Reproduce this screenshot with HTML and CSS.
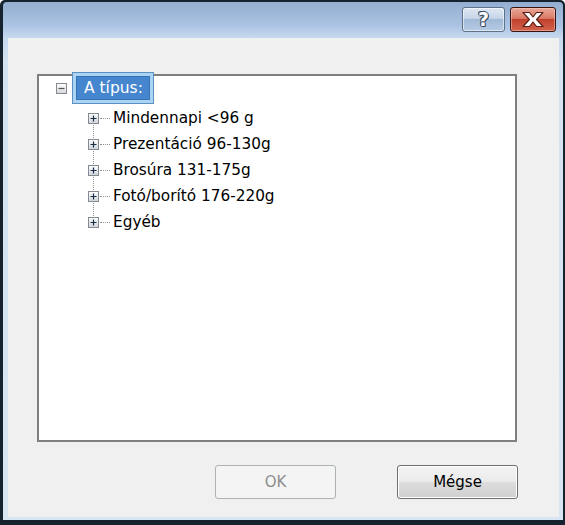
FILE: index.html
```html
<!DOCTYPE html>
<html lang="hu">
<head>
<meta charset="utf-8">
<title>A típus</title>
<link rel="stylesheet" href="styles.css">
</head>
<body>
<div class="window">
  <div class="frame">
    <div class="titlebar">
      <button class="cap-btn help" type="button"><span class="q">?</span></button>
      <button class="cap-btn close" type="button">
        <svg width="24" height="17" viewBox="0 0 24 17" aria-hidden="true">
          <path d="M2 1.5 H8.5 L12 6 L15.5 1.5 H22 L15.6 8.5 L22 15.5 H15.5 L12 11 L8.5 15.5 H2 L8.4 8.5 Z" fill="#ffffff" stroke="#5a2018" stroke-width="1.2" stroke-linejoin="round"/>
        </svg>
      </button>
    </div>
    <div class="content">
      <div class="tree">
        <div class="root-row">
          <svg class="expander" width="11" height="11" viewBox="0 0 11 11" aria-hidden="true">
            <defs><linearGradient id="gm" x1="0" y1="0" x2="0" y2="1"><stop offset="0" stop-color="#ffffff"/><stop offset="1" stop-color="#d3d6da"/></linearGradient></defs>
            <rect x="0.5" y="0.5" width="10" height="10" fill="url(#gm)" stroke="#858a90"/>
            <path d="M2.5 5.5 H8.5" stroke="#555555" stroke-width="1.2"/>
          </svg>
          <span class="root-label">A típus:</span>
        </div>
        <ul class="children">
          <li class="node"><svg class="expander" width="11" height="11" viewBox="0 0 11 11" aria-hidden="true"><defs><linearGradient id="gp" x1="0" y1="0" x2="0" y2="1"><stop offset="0" stop-color="#ffffff"/><stop offset="1" stop-color="#cfd4da"/></linearGradient></defs><rect x="0.5" y="0.5" width="10" height="10" fill="url(#gp)" stroke="#858a90"/><path d="M2.5 5.5 H8.5 M5.5 2.5 V8.5" stroke="#1a2e48" stroke-width="1.2"/></svg><span class="connector"></span><span class="node-text">Mindennapi &lt;96 g</span></li>
          <li class="node"><svg class="expander" width="11" height="11" viewBox="0 0 11 11" aria-hidden="true"><rect x="0.5" y="0.5" width="10" height="10" fill="url(#gp)" stroke="#858a90"/><path d="M2.5 5.5 H8.5 M5.5 2.5 V8.5" stroke="#1a2e48" stroke-width="1.2"/></svg><span class="connector"></span><span class="node-text">Prezentáció 96-130g</span></li>
          <li class="node"><svg class="expander" width="11" height="11" viewBox="0 0 11 11" aria-hidden="true"><rect x="0.5" y="0.5" width="10" height="10" fill="url(#gp)" stroke="#858a90"/><path d="M2.5 5.5 H8.5 M5.5 2.5 V8.5" stroke="#1a2e48" stroke-width="1.2"/></svg><span class="connector"></span><span class="node-text">Brosúra 131-175g</span></li>
          <li class="node"><svg class="expander" width="11" height="11" viewBox="0 0 11 11" aria-hidden="true"><rect x="0.5" y="0.5" width="10" height="10" fill="url(#gp)" stroke="#858a90"/><path d="M2.5 5.5 H8.5 M5.5 2.5 V8.5" stroke="#1a2e48" stroke-width="1.2"/></svg><span class="connector"></span><span class="node-text">Fotó/borító 176-220g</span></li>
          <li class="node"><svg class="expander" width="11" height="11" viewBox="0 0 11 11" aria-hidden="true"><rect x="0.5" y="0.5" width="10" height="10" fill="url(#gp)" stroke="#858a90"/><path d="M2.5 5.5 H8.5 M5.5 2.5 V8.5" stroke="#1a2e48" stroke-width="1.2"/></svg><span class="connector"></span><span class="node-text">Egyéb</span></li>
        </ul>
      </div>
      <div class="actions">
        <button class="btn btn-disabled" type="button" disabled>OK</button>
        <button class="btn btn-default" type="button">Mégse</button>
      </div>
    </div>
  </div>
</div>
</body>
</html>
```
FILE: styles.css
```css
* { box-sizing: border-box; }

html, body {
  margin: 0;
  padding: 0;
  background: #ffffff;
}

body {
  font-family: "DejaVu Sans", "Liberation Sans", sans-serif;
  font-size: 15px;
  color: #000;
}

.window {
  width: 565px;
  height: 525px;
  background: #16222e;
  padding: 2px 2px 5px 3px;
  border-radius: 5px 5px 0 0;
}

.frame {
  height: 100%;
  display: flex;
  flex-direction: column;
  padding: 0 4px 3px 5px;
  background: linear-gradient(#93aed1 0px, #acc4e3 24px, #c7d9ee 36px, #d4e3f2 60px, #d8e6f3 100%);
  border-radius: 4px 4px 0 0;
}

.titlebar {
  height: 36px;
  flex: none;
  display: flex;
  justify-content: flex-end;
  align-items: flex-start;
  gap: 5px;
  padding: 5px 3px 0 0;
}

.cap-btn {
  height: 25px;
  margin: 0;
  padding: 0;
  border-radius: 3px;
  display: flex;
  align-items: center;
  justify-content: center;
  cursor: default;
}

.help {
  width: 43px;
  border: 1px solid #5f7289;
  background: linear-gradient(#dfe8f3 0%, #c6d5e8 45%, #a3bad8 50%, #b5cae3 100%);
  box-shadow: inset 0 0 0 1px rgba(255,255,255,0.55);
}

.help .q {
  font-family: "DejaVu Sans", sans-serif;
  font-weight: bold;
  font-size: 19px;
  color: #ffffff;
  line-height: 1;
  text-shadow: 1px 0 0 #3d4f66, -1px 0 0 #3d4f66, 0 1px 0 #3d4f66, 0 -1px 0 #3d4f66, 1px 1px 0 #3d4f66, -1px -1px 0 #3d4f66;
}

.close {
  width: 46px;
  border: 1px solid #3a1410;
  background: linear-gradient(#e9a898 0%, #d97a66 45%, #c2412d 50%, #d2634c 100%);
  box-shadow: inset 0 0 0 1px rgba(255,220,210,0.45);
}

.content {
  flex: 1;
  display: flex;
  flex-direction: column;
  background: #f0f0f0;
  padding: 36px 41px 0 29px;
}

.tree {
  height: 368px;
  margin-right: 1px;
  background: #ffffff;
  border: 2px solid #7f7f7f;
}

.root-row {
  height: 24px;
  display: flex;
  align-items: center;
  padding-left: 17px;
}

.expander {
  flex: none;
  display: block;
  position: relative;
  z-index: 1;
}

.root-label {
  margin-left: 10px;
  height: 22px;
  line-height: 22px;
  padding: 0 6px 0 7px;
  font-size: 15.5px;
  color: #ffffff;
  background: #4586cf;
  box-shadow: 0 0 0 1px #3672b4, 0 0 0 4px #a9d4f2, 0 0 0 5px #5d90c2;
}

.children {
  list-style: none;
  margin: 5px 0 0 0;
  padding: 0 0 0 49px;
  position: relative;
}

.children::before {
  content: "";
  position: absolute;
  left: 54px;
  top: 13px;
  bottom: 13px;
  border-left: 1px dotted #8f8f8f;
}

.node {
  height: 26px;
  display: flex;
  align-items: center;
}

.connector {
  width: 10px;
  margin: 0 3px 0 1px;
  border-top: 1px dotted #8f8f8f;
}

.node-text {
  white-space: nowrap;
  font-size: 15.3px;
}

.actions {
  display: flex;
  justify-content: flex-end;
  gap: 61px;
  margin-top: 23px;
}

.btn {
  width: 121px;
  height: 34px;
  margin: 0;
  padding: 0;
  font-family: "DejaVu Sans", "Liberation Sans", sans-serif;
  font-size: 15px;
  border-radius: 3px;
}

.btn-disabled {
  border: 1px solid #adb2b5;
  background: #f4f4f4;
  color: #8d8d8d;
}

.btn-default {
  border: 1px solid #6f6f6f;
  color: #000;
  background: linear-gradient(#f3f3f3 0%, #ebebeb 48%, #dddddd 52%, #cfcfcf 100%);
  box-shadow: inset 0 0 0 1px #ffffff;
}
```
